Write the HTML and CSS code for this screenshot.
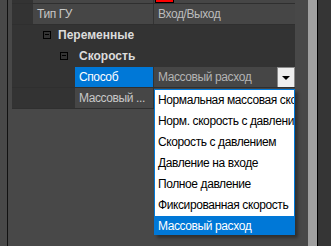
FILE: index.html
```html
<!DOCTYPE html>
<html lang="ru">
<head>
	<meta charset="UTF-8"/>
	<title>Свойства</title>
	<link rel="stylesheet" href="styles.css">
</head>
<body>
	<div class="desk">
		<div class="edge"></div>

		<div class="panel">
			<div class="grid">
				<div class="row prop">
					<div class="indent"></div>
					<div class="name"></div>
					<div class="value"><span class="swatch"></span></div>
				</div>
				<div class="row prop">
					<div class="indent"></div>
					<div class="name">Тип ГУ</div>
					<div class="value">Вход/Выход</div>
				</div>
				<div class="row cat lvl1">
					<span class="toggle"></span>
					<span class="title">Переменные</span>
				</div>
				<div class="row cat lvl2">
					<span class="toggle"></span>
					<span class="title">Скорость</span>
				</div>
				<div class="row prop deep">
					<div class="indent"></div>
					<div class="name selected">Способ</div>
					<div class="value combo">
						<span class="combo-text">Массовый расход</span>
						<span class="combo-btn"><span class="arrow"></span></span>
					</div>
				</div>
				<div class="row prop deep">
					<div class="indent"></div>
					<div class="name">Массовый ...</div>
					<div class="value"></div>
				</div>
			</div>
		</div>

		<div class="splitter"></div>
		<div class="side"></div>
	</div>

	<ul class="droplist">
		<li>Нормальная массовая скорость</li>
		<li>Норм. скорость с давлением</li>
		<li>Скорость с давлением</li>
		<li>Давление на входе</li>
		<li>Полное давление</li>
		<li>Фиксированная скорость</li>
		<li class="active">Массовый расход</li>
	</ul>
</body>
</html>
```

FILE: styles.css
```css
* {
	margin: 0;
	padding: 0;
	box-sizing: border-box;
}

body {
	background-color: #484848;
	color: #c8c8c8;
	font-family: "Liberation Sans", Arial, sans-serif;
	font-size: 12px;
	letter-spacing: -.4px;
	overflow: hidden;
}

.desk {
	display: flex;
	width: 331px;
	height: 246px;
}

.edge {
	width: 8px;
	background-color: #484848;
	border-right: 1px solid #111;
}

.panel {
	width: 300px;
	padding: 0 13px 0 4px;
	background-color: #484848;
	overflow: hidden;
}

.grid {
	margin-top: -17px;
	width: 283px;
}

.row {
	display: flex;
	height: 21px;
	border-bottom: 1px solid #2f2f2f;
	line-height: 20px;
	white-space: nowrap;
}

.indent {
	width: 21px;
	background-color: #333;
}
.deep .indent {
	width: 63px;
}

.name {
	flex: 1;
	padding-left: 4px;
	background-color: #464646;
	border-right: 1px solid #333;
	overflow: hidden;
}
.name.selected {
	background-color: #0078d7;
	color: #fff;
}

.value {
	display: flex;
	width: 141px;
	padding-left: 4px;
	background-color: #464646;
	color: #bcbcbc;
	overflow: hidden;
}

.swatch {
	width: 19px;
	height: 16px;
	margin: 4px 0 0 -3px;
	background-color: #f00;
	border: 1px solid #000;
}

.combo {
	justify-content: space-between;
	color: #b4b4b4;
}
.combo-btn {
	display: flex;
	justify-content: center;
	align-items: center;
	width: 18px;
	height: 20px;
	background-color: #eee;
	border: 1px solid #8a8a8a;
	border-bottom: none;
}
.arrow {
	width: 0;
	height: 0;
	border-left: 4px solid transparent;
	border-right: 4px solid transparent;
	border-top: 4px solid #000;
	margin-top: 1px;
}

.cat {
	align-items: center;
	background-color: #333;
	border-bottom-color: #333;
	color: #dcdcdc;
	font-weight: bold;
	letter-spacing: 0;
}
.toggle {
	position: relative;
	width: 8px;
	height: 8px;
	border: 1px solid #000;
}
.toggle::after {
	content: "";
	position: absolute;
	left: 1px;
	top: 2px;
	width: 4px;
	height: 1px;
	background-color: #000;
}
.lvl1 .toggle {
	margin: 0 7px 0 31px;
}
.lvl2 .toggle {
	margin: 0 11px 0 48px;
}

.splitter {
	width: 10px;
	background-color: #a0a0a0;
	border-right: 1px solid #000;
}

.side {
	width: 13px;
	background-color: #353535;
}

.droplist {
	position: absolute;
	left: 154px;
	top: 89px;
	width: 141px;
	height: 146px;
	list-style: none;
	background-color: #fff;
	border: 1px solid #0078d7;
	box-shadow: 3px 3px 3px rgba(0, 0, 0, .35);
	overflow: hidden;
}
.droplist li {
	height: 21px;
	padding-left: 3px;
	line-height: 21px;
	color: #000;
	white-space: nowrap;
	overflow: hidden;
}
.droplist li.active {
	background-color: #0078d7;
	color: #fff;
}
```
